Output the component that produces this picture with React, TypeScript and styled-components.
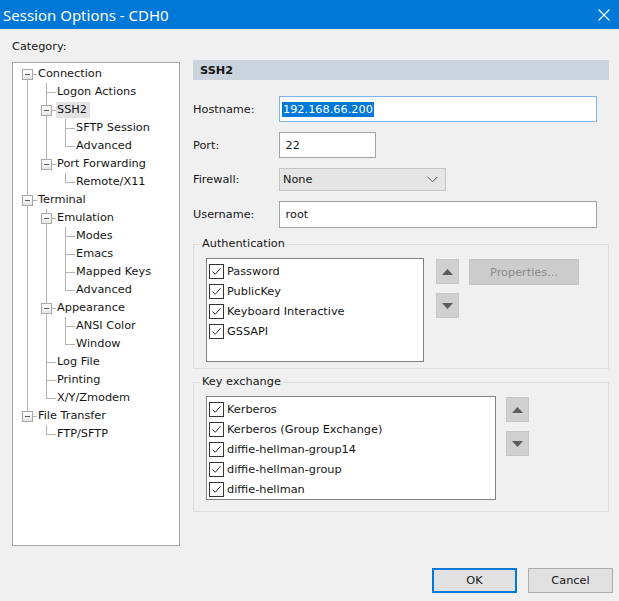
import React from "react";
import styled, { createGlobalStyle } from "styled-components";

const GlobalStyle = createGlobalStyle`
  html, body {
    margin: 0;
    padding: 0;
    background: #f0f0f0;
  }
  body {
    font-family: "DejaVu Sans", Tahoma, sans-serif;
    font-size: 11.3px;
    color: #161616;
  }
`;

type Node = { label: string; selected?: boolean; children?: Node[] };

const tree: Node[] = [
  {
    label: "Connection",
    children: [
      { label: "Logon Actions" },
      {
        label: "SSH2",
        selected: true,
        children: [{ label: "SFTP Session" }, { label: "Advanced" }],
      },
      { label: "Port Forwarding", children: [{ label: "Remote/X11" }] },
    ],
  },
  {
    label: "Terminal",
    children: [
      {
        label: "Emulation",
        children: [
          { label: "Modes" },
          { label: "Emacs" },
          { label: "Mapped Keys" },
          { label: "Advanced" },
        ],
      },
      {
        label: "Appearance",
        children: [{ label: "ANSI Color" }, { label: "Window" }],
      },
      { label: "Log File" },
      { label: "Printing" },
      { label: "X/Y/Zmodem" },
    ],
  },
  { label: "File Transfer", children: [{ label: "FTP/SFTP" }] },
];

type Guide = { up: boolean; down: boolean; right: boolean };
type Row = {
  label: string;
  selected?: boolean;
  expandable: boolean;
  guides: Guide[];
};

// plat lijst maken van de boom, met de lijnen per kolom
function flatten(nodes: Node[], depth: number, rails: boolean[], out: Row[]) {
  nodes.forEach((n, i) => {
    const hasNext = i < nodes.length - 1;
    const guides: Guide[] = rails.map((r) => ({ up: r, down: r, right: false }));
    guides.push({ up: depth > 0 || i > 0, down: hasNext, right: true });
    out.push({
      label: n.label,
      selected: n.selected,
      expandable: !!n.children,
      guides,
    });
    if (n.children) flatten(n.children, depth + 1, [...rails, hasNext], out);
  });
  return out;
}

const rows = flatten(tree, 0, [], []);

const Window = styled.div`
  width: 619px;
  height: 601px;
  display: flex;
  flex-direction: column;
  background: #f0f0f0;
  overflow: hidden;
`;

const TitleBar = styled.div`
  height: 29px;
  flex: none;
  background: #0078d7;
  color: #fff;
  display: flex;
  align-items: center;
  justify-content: space-between;
  padding: 0 9px 0 3px;
  font-family: "Noto Sans", "Open Sans", sans-serif;
  font-size: 15px;
`;

const Body = styled.div`
  flex: 1;
  display: flex;
  flex-direction: column;
  padding: 0 6px 8px 12px;
`;

const Main = styled.div`
  display: grid;
  grid-template-columns: 168px 416px;
  column-gap: 13px;
`;

const LeftCol = styled.div`
  display: flex;
  flex-direction: column;
  padding-top: 10px;
`;

const Caption = styled.div`
  line-height: 16px;
  margin-bottom: 7px;
`;

const TreeBox = styled.div`
  height: 484px;
  box-sizing: border-box;
  background: #fff;
  border: 1px solid #a9a9a9;
  padding: 2px 0 0 5px;
`;

const TreeRow = styled.div`
  display: flex;
  height: 18px;
  align-items: center;
`;

const GuideCell = styled.span<{ $up: boolean; $down: boolean; $right: boolean }>`
  position: relative;
  width: 19px;
  height: 18px;
  flex: none;
  display: flex;
  align-items: center;
  justify-content: center;

  &::before {
    content: "";
    position: absolute;
    left: 9px;
    width: 1px;
    background: #b3b3b3;
    top: ${(p) => (p.$up ? "0" : "9px")};
    bottom: ${(p) => (p.$down ? "0" : "9px")};
  }
  &::after {
    content: "";
    display: ${(p) => (p.$right ? "block" : "none")};
    position: absolute;
    left: 9px;
    right: 0;
    top: 9px;
    height: 1px;
    background: #b3b3b3;
  }
`;

const Expander = styled.span`
  position: relative;
  z-index: 1;
  width: 11px;
  height: 11px;
  box-sizing: border-box;
  border: 1px solid #a8a8a8;
  background: linear-gradient(#ffffff, #e6e6e6);
  display: flex;
  align-items: center;
  justify-content: center;

  &::before {
    content: "";
    width: 5px;
    height: 1px;
    background: #5a5a5a;
  }
`;

const NodeLabel = styled.span<{ $selected?: boolean }>`
  padding: 1px 3px 1px 1px;
  line-height: 14px;
  white-space: nowrap;
  background: ${(p) => (p.$selected ? "#e3e3e3" : "transparent")};
`;

const RightCol = styled.div`
  display: flex;
  flex-direction: column;
  padding-top: 31px;
`;

const PanelHeader = styled.div`
  height: 20px;
  background: #cad4de;
  font-weight: bold;
  display: flex;
  align-items: center;
  padding-left: 7px;
`;

const Form = styled.div`
  margin-top: 16px;
  display: grid;
  grid-template-columns: 86px auto;
  row-gap: 10px;
  align-items: center;
`;

const Field = styled.div<{ $w: number; $h: number; $focus?: boolean }>`
  width: ${(p) => p.$w}px;
  height: ${(p) => p.$h}px;
  box-sizing: border-box;
  background: #fff;
  border: 1px solid ${(p) => (p.$focus ? "#7eb4ea" : "#a3a3a3")};
  display: flex;
  align-items: center;
  padding-left: 2px;
`;

const Highlight = styled.span`
  background: #0078d7;
  color: #fff;
  padding: 0 1px;
  line-height: 15px;
`;

const Select = styled.div`
  width: 167px;
  height: 23px;
  box-sizing: border-box;
  background: #e5e5e5;
  border: 1px solid #c4c4c4;
  display: flex;
  align-items: center;
  justify-content: space-between;
  padding: 0 7px 0 3px;
`;

const Group = styled.fieldset<{ $pb: number; $mt: number }>`
  margin: ${(p) => p.$mt}px 0 0;
  padding: 7px 12px ${(p) => p.$pb}px;
  border: 1px solid #dcdcdc;
  min-width: 0;
  display: flex;
  align-items: flex-start;
`;

const Legend = styled.legend`
  padding: 0 2px;
  margin-left: -6px;
  line-height: 14px;
`;

const ListBox = styled.div<{ $w: number }>`
  width: ${(p) => p.$w}px;
  height: 104px;
  box-sizing: border-box;
  background: #fff;
  border: 1px solid #828282;
  padding: 2px 0 0 2px;
  flex: none;
`;

const CheckRow = styled.div`
  display: flex;
  align-items: center;
  height: 20px;
  gap: 3px;
  white-space: nowrap;
`;

const CheckBox = styled.span`
  width: 15px;
  height: 15px;
  box-sizing: border-box;
  border: 1px solid #333;
  background: #fff;
  display: flex;
  align-items: center;
  justify-content: center;
`;

const ArrowCol = styled.div<{ $ml: number }>`
  display: flex;
  flex-direction: column;
  gap: 9px;
  margin-left: ${(p) => p.$ml}px;
  margin-top: 1px;
`;

const ArrowButton = styled.div`
  width: 23px;
  height: 25px;
  box-sizing: border-box;
  background: #d0d0d0;
  border: 1px solid #c6c6c6;
  display: flex;
  align-items: center;
  justify-content: center;
`;

const DisabledButton = styled.div`
  width: 110px;
  height: 26px;
  box-sizing: border-box;
  margin: 1px 0 0 10px;
  background: #cccccc;
  border: 1px solid #c2c2c2;
  color: #8a8a8a;
  display: flex;
  align-items: center;
  justify-content: center;
`;

const Footer = styled.div`
  margin-top: auto;
  display: flex;
  justify-content: flex-end;
  gap: 11px;
`;

const DialogButton = styled.button<{ $default?: boolean }>`
  width: 85px;
  height: 25px;
  box-sizing: border-box;
  font: inherit;
  color: #161616;
  background: #e1e1e1;
  border: ${(p) => (p.$default ? "2px solid #0078d7" : "1px solid #adadad")};
  padding: 0;
`;

const Check = () => (
  <svg width="11" height="11" viewBox="0 0 11 11">
    <polyline points="1.5,5.5 4.2,8.3 9.6,2.2" fill="none" stroke="#2a2a2a" strokeWidth="1" />
  </svg>
);

const Triangle = ({ down }: { down?: boolean }) => (
  <svg width="11" height="6" viewBox="0 0 11 6">
    <polygon points={down ? "0,0 11,0 5.5,6" : "0,6 11,6 5.5,0"} fill="#5c5c5c" />
  </svg>
);

const Chevron = () => (
  <svg width="11" height="7" viewBox="0 0 11 7">
    <polyline points="0.5,0.8 5.5,5.8 10.5,0.8" fill="none" stroke="#555" strokeWidth="1" />
  </svg>
);

const CloseIcon = () => (
  <svg width="12" height="12" viewBox="0 0 12 12">
    <path d="M0.5 0.5 L11.5 11.5 M11.5 0.5 L0.5 11.5" stroke="#fff" strokeWidth="1.1" />
  </svg>
);

function CheckList({ items, width }: { items: string[]; width: number }) {
  return (
    <ListBox $w={width}>
      {items.map((it) => (
        <CheckRow key={it}>
          <CheckBox>
            <Check />
          </CheckBox>
          {it}
        </CheckRow>
      ))}
    </ListBox>
  );
}

function Arrows({ ml }: { ml: number }) {
  return (
    <ArrowCol $ml={ml}>
      <ArrowButton>
        <Triangle />
      </ArrowButton>
      <ArrowButton>
        <Triangle down />
      </ArrowButton>
    </ArrowCol>
  );
}

export default function App() {
  return (
    <>
      <GlobalStyle />
      <Window>
        <TitleBar>
          <span>Session Options - CDH0</span>
          <CloseIcon />
        </TitleBar>
        <Body>
          <Main>
            <LeftCol>
              <Caption>Category:</Caption>
              <TreeBox>
                {rows.map((r, i) => (
                  <TreeRow key={i}>
                    {r.guides.map((g, j) => (
                      <GuideCell key={j} $up={g.up} $down={g.down} $right={g.right}>
                        {j === r.guides.length - 1 && r.expandable && <Expander />}
                      </GuideCell>
                    ))}
                    <NodeLabel $selected={r.selected}>{r.label}</NodeLabel>
                  </TreeRow>
                ))}
              </TreeBox>
            </LeftCol>

            <RightCol>
              <PanelHeader>SSH2</PanelHeader>
              <Form>
                <span>Hostname:</span>
                <Field $w={318} $h={26} $focus>
                  <Highlight>192.168.66.200</Highlight>
                </Field>
                <span>Port:</span>
                <Field $w={97} $h={26}>
                  &nbsp;22
                </Field>
                <span>Firewall:</span>
                <Select>
                  <span>None</span>
                  <Chevron />
                </Select>
                <span>Username:</span>
                <Field $w={318} $h={27}>
                  &nbsp;root
                </Field>
              </Form>

              <Group $mt={9} $pb={6}>
                <Legend>Authentication</Legend>
                <CheckList
                  width={218}
                  items={["Password", "PublicKey", "Keyboard Interactive", "GSSAPI"]}
                />
                <Arrows ml={12} />
                <DisabledButton>Properties...</DisabledButton>
              </Group>

              <Group $mt={6} $pb={11}>
                <Legend>Key exchange</Legend>
                <CheckList
                  width={290}
                  items={[
                    "Kerberos",
                    "Kerberos (Group Exchange)",
                    "diffie-hellman-group14",
                    "diffie-hellman-group",
                    "diffie-hellman",
                  ]}
                />
                <Arrows ml={10} />
              </Group>
            </RightCol>
          </Main>

          <Footer>
            <DialogButton $default>OK</DialogButton>
            <DialogButton>Cancel</DialogButton>
          </Footer>
        </Body>
      </Window>
    </>
  );
}
